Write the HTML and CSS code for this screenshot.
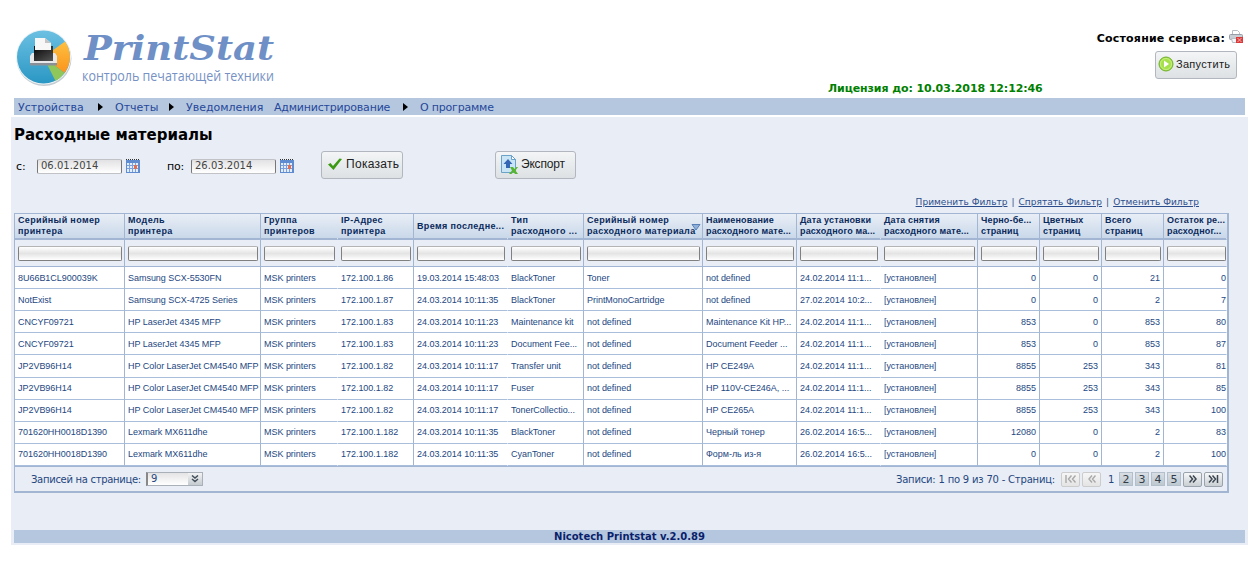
FILE: index.html
```html
<!DOCTYPE html>
<html lang="ru">
<head>
    <meta charset="UTF-8">
    <title>PrintStat</title>
    <link rel="stylesheet" href="styles.css">
</head>
<body>

    <!-- Shared icons -->
    <svg class="defs" width="0" height="0">
        <symbol id="calendar" viewBox="0 0 14 14">
            <rect x="0" y="1" width="14" height="13" fill="#5f8bd0"/>
            <rect x="1" y="4" width="11" height="9" fill="#e4edfa"/>
            <path d="M0 .5h14" stroke="#333" stroke-dasharray="1 1"/>
            <path d="M1 6.500h11M1 9.500h11M3.500 4v9M6.500 4v9M9.500 4v9" stroke="#7ba0dc"/>
            <rect x="8" y="6" width="3" height="4" fill="#e07050"/>
        </symbol>
    </svg>

    <!-- Header -->
    <div class="header">
        <svg class="logo" width="270" height="70" viewBox="0 0 270 70">
            <defs>
                <linearGradient id="blue" x1="0" y1="0" x2="0" y2="1">
                    <stop offset="0" stop-color="#6cc0e2"/>
                    <stop offset="1" stop-color="#2a97c4"/>
                </linearGradient>
                <linearGradient id="orange" x1="0" y1="0" x2="0" y2="1">
                    <stop offset="0" stop-color="#fdc040"/>
                    <stop offset="1" stop-color="#fb931d"/>
                </linearGradient>
                <linearGradient id="dark" x1="0" y1="0" x2="1" y2="1">
                    <stop offset="0" stop-color="#111"/>
                    <stop offset="1" stop-color="#555"/>
                </linearGradient>
            </defs>
            <circle cx="30" cy="34.500" r="27.500" fill="#c4cdd2"/>
            <circle cx="29.500" cy="33" r="27.500" fill="#eef3f5"/>
            <circle cx="29.500" cy="33" r="26.500" fill="url(#blue)"/>
            <path d="M29.500 33L51 17.500A26.500 26.500 0 0 1 50.500 49z" fill="url(#orange)"/>
            <path d="M29.500 33L50.500 49A26.500 26.500 0 0 1 41.500 57z" fill="#90c75a"/>
            <!-- printer -->
            <path d="M18 29h23l2 3v8H16v-8z" fill="#e8e8ea"/>
            <path d="M16 39h27v2.500H16z" fill="#8b9098"/>
            <path d="M20 22h19v14H20z" fill="url(#dark)"/>
            <path d="M21 28V14h10l6 5v9z" fill="#f7f7f7"/>
            <path d="M31 14v5h6z" fill="#c4c4c4"/>
            <path d="M20 26h19v11H20z" fill="url(#dark)"/>
            <text class="logo-name" x="70" y="36" textLength="190" lengthAdjust="spacingAndGlyphs">PrintStat</text>
            <text class="logo-sub" x="68" y="56.500" textLength="192" lengthAdjust="spacingAndGlyphs">контроль печатающей техники</text>
        </svg>
        <div class="license">Лицензия до: 10.03.2018 12:12:46</div>
        <div class="service">
            <div class="state">
                <span>Состояние сервиса:</span>
                <svg width="14" height="15" viewBox="0 0 14 15">
                    <path d="M3.500 6V1.500h5l2 2V6" fill="#fff" stroke="#b8bcc4"/>
                    <rect x=".5" y="5.500" width="13" height="5" rx="1" fill="#c9cdd4" stroke="#989ea8"/>
                    <path d="M2.500 9.500h8v4h-7z" fill="#f6f6f8" stroke="#b8bcc4"/>
                    <rect x="7" y="8" width="7" height="6" fill="#d93a3a"/>
                    <path d="M8.500 9l4 4M12.500 9l-4 4" stroke="#f4b0b0"/>
                </svg>
            </div>
            <button class="btn start">
                <svg width="16" height="16" viewBox="0 0 16 16">
                    <circle cx="8" cy="8" r="7" fill="#a6e04a" stroke="#6fae2c"/>
                    <circle cx="8" cy="8" r="5.500" fill="none" stroke="#c8f07e"/>
                    <path d="M6 4.500l5 3.500-5 3.500z" fill="#fff"/>
                </svg>
                <span>Запустить</span>
            </button>
        </div>
    </div>

    <!-- Menu -->
    <div class="menu">
        <a class="m1">Устройства</a><i class="arrow"></i>
        <a class="m2">Отчеты</a><i class="arrow"></i>
        <a class="m3">Уведомления</a>
        <a class="m4">Администрирование</a><i class="arrow"></i>
        <a class="m5">О программе</a>
    </div>

    <div class="content">
        <h1>Расходные материалы</h1>

        <div class="toolbar">
            <label class="from">с:</label>
            <input class="date" type="text" value="06.01.2014">
            <svg class="cal" width="14" height="14"><use href="#calendar"/></svg>
            <label class="to">по:</label>
            <input class="date" type="text" value="26.03.2014">
            <svg class="cal" width="14" height="14"><use href="#calendar"/></svg>
            <button class="btn show">
                <svg width="14" height="12" viewBox="0 0 14 12">
                    <path d="M0 6.500l2.500-1.500 2.500 3L11.500.5 14 1 5.500 12z" fill="#3c9a12"/>
                </svg>
                <span>Показать</span>
            </button>
            <button class="btn export">
                <svg width="17" height="19" viewBox="0 0 17 19">
                    <path d="M.5.5h10l4 4v13H.5z" fill="#c9e4f4" stroke="#6ba3c8"/>
                    <path d="M10.500.5v4h4z" fill="#fff" stroke="#6ba3c8"/>
                    <path d="M7 4l4.500 5H9v4H5V9H2.500z" fill="#3566b4"/>
                    <path d="M9 12h3l1.500 2 2-2H17l-2.500 3.500L17 19h-3l-1.500-2-2 2H8l3-3.500z" fill="#58b530"/>
                </svg>
                <span>Экспорт</span>
            </button>
        </div>

        <div class="filter-links">
            <a>Применить Фильтр</a><span>|</span><a>Спрятать Фильтр</a><span>|</span><a>Отменить Фильтр</a>
        </div>

        <div class="grid">
            <table>
                <colgroup>
                    <col class="w110"><col class="w136"><col class="w77"><col class="w76"><col class="w94"><col class="w76"><col class="w119">
                    <col class="w94"><col class="w84"><col class="w97"><col class="w62"><col class="w62"><col class="w62"><col class="w63">
                </colgroup>
                <thead>
                    <tr class="titles">
                        <th>Серийный номер<br>принтера</th>
                        <th>Модель<br>принтера</th>
                        <th>Группа<br>принтеров</th>
                        <th>IP-Адрес<br>принтера</th>
                        <th>Время последне...</th>
                        <th>Тип<br>расходного ...</th>
                        <th class="sorted">Серийный номер<br>расходного материала
                            <svg width="10" height="7" viewBox="0 0 10 7"><path d="M1 .5h8L5 6z" fill="#8fb0d8" stroke="#5880b4"/></svg>
                        </th>
                        <th>Наименование<br>расходного мате...</th>
                        <th>Дата установки<br>расходного ма...</th>
                        <th>Дата снятия<br>расходного мате...</th>
                        <th>Черно-бе...<br>страниц</th>
                        <th>Цветных<br>страниц</th>
                        <th>Всего<br>страниц</th>
                        <th>Остаток ре...<br>расходног...</th>
                    </tr>
                    <tr class="filters">
                        <td><input type="text"></td><td><input type="text"></td><td><input type="text"></td><td><input type="text"></td><td><input type="text"></td><td><input type="text"></td><td><input type="text"></td>
                        <td><input type="text"></td><td><input type="text"></td><td><input type="text"></td><td><input type="text"></td><td><input type="text"></td><td><input type="text"></td><td><input type="text"></td>
                    </tr>
                </thead>
                <tbody>
                    <tr><td>8U66B1CL900039K</td><td>Samsung SCX-5530FN</td><td>MSK printers</td><td>172.100.1.86</td><td>19.03.2014 15:48:03</td><td>BlackToner</td><td>Toner</td><td>not defined</td><td>24.02.2014 11:1...</td><td>[установлен]</td><td>0</td><td>0</td><td>21</td><td>0</td></tr>
                    <tr><td>NotExist</td><td>Samsung SCX-4725 Series</td><td>MSK printers</td><td>172.100.1.87</td><td>24.03.2014 10:11:35</td><td>BlackToner</td><td>PrintMonoCartridge</td><td>not defined</td><td>27.02.2014 10:2...</td><td>[установлен]</td><td>0</td><td>0</td><td>2</td><td>7</td></tr>
                    <tr><td>CNCYF09721</td><td>HP LaserJet 4345 MFP</td><td>MSK printers</td><td>172.100.1.83</td><td>24.03.2014 10:11:23</td><td>Maintenance kit</td><td>not defined</td><td>Maintenance Kit HP...</td><td>24.02.2014 11:1...</td><td>[установлен]</td><td>853</td><td>0</td><td>853</td><td>80</td></tr>
                    <tr><td>CNCYF09721</td><td>HP LaserJet 4345 MFP</td><td>MSK printers</td><td>172.100.1.83</td><td>24.03.2014 10:11:23</td><td>Document Fee...</td><td>not defined</td><td>Document Feeder ...</td><td>24.02.2014 11:1...</td><td>[установлен]</td><td>853</td><td>0</td><td>853</td><td>87</td></tr>
                    <tr><td>JP2VB96H14</td><td>HP Color LaserJet CM4540 MFP</td><td>MSK printers</td><td>172.100.1.82</td><td>24.03.2014 10:11:17</td><td>Transfer unit</td><td>not defined</td><td>HP CE249A</td><td>24.02.2014 11:1...</td><td>[установлен]</td><td>8855</td><td>253</td><td>343</td><td>81</td></tr>
                    <tr><td>JP2VB96H14</td><td>HP Color LaserJet CM4540 MFP</td><td>MSK printers</td><td>172.100.1.82</td><td>24.03.2014 10:11:17</td><td>Fuser</td><td>not defined</td><td>HP 110V-CE246A, ...</td><td>24.02.2014 11:1...</td><td>[установлен]</td><td>8855</td><td>253</td><td>343</td><td>85</td></tr>
                    <tr><td>JP2VB96H14</td><td>HP Color LaserJet CM4540 MFP</td><td>MSK printers</td><td>172.100.1.82</td><td>24.03.2014 10:11:17</td><td>TonerCollectio...</td><td>not defined</td><td>HP CE265A</td><td>24.02.2014 11:1...</td><td>[установлен]</td><td>8855</td><td>253</td><td>343</td><td>100</td></tr>
                    <tr><td>701620HH0018D1390</td><td>Lexmark MX611dhe</td><td>MSK printers</td><td>172.100.1.182</td><td>24.03.2014 10:11:35</td><td>BlackToner</td><td>not defined</td><td>Черный тонер</td><td>26.02.2014 16:5...</td><td>[установлен]</td><td>12080</td><td>0</td><td>2</td><td>83</td></tr>
                    <tr><td>701620HH0018D1390</td><td>Lexmark MX611dhe</td><td>MSK printers</td><td>172.100.1.182</td><td>24.03.2014 10:11:35</td><td>CyanToner</td><td>not defined</td><td>Форм-ль из-я</td><td>26.02.2014 16:5...</td><td>[установлен]</td><td>0</td><td>0</td><td>2</td><td>100</td></tr>
                </tbody>
            </table>

            <!-- Pager -->
            <div class="pager">
                <span class="page-size-label">Записей на странице:</span>
                <div class="page-size">
                    <span>9</span>
                    <div class="drop"><svg width="8" height="8" viewBox="0 0 8 8"><path d="M1 .5l3 2.500L7 .5M1 4l3 2.500L7 4" fill="none" stroke="#444f5c" stroke-width="1.500"/></svg></div>
                </div>
                <span class="total">Записи: 1 по 9 из 70 - Страниц:</span>
                <a class="nav off"><svg width="12" height="8" viewBox="0 0 12 8"><path d="M1 0v8M6.500.5L3.500 4l3 3.500M10.500.5L7.500 4l3 3.500" fill="none" stroke="#a8a8a8" stroke-width="1.400"/></svg></a>
                <a class="nav off"><svg width="8" height="8" viewBox="0 0 8 8"><path d="M4 .5L1 4l3 3.500M7.500.5L4.500 4l3 3.500" fill="none" stroke="#a8a8a8" stroke-width="1.400"/></svg></a>
                <span class="current">1</span>
                <a class="page">2</a>
                <a class="page">3</a>
                <a class="page">4</a>
                <a class="page">5</a>
                <a class="nav"><svg width="8" height="8" viewBox="0 0 8 8"><path d="M.5.5l3 3.500-3 3.500M4 .5L7 4 4 7.500" fill="none" stroke="#3c4650" stroke-width="1.500"/></svg></a>
                <a class="nav"><svg width="11" height="8" viewBox="0 0 11 8"><path d="M1 .5L4 4 1 7.500M4.500.5l3 3.500-3 3.500M9.500 0v8" fill="none" stroke="#3c4650" stroke-width="1.500"/></svg></a>
            </div>
        </div>

        <div class="footer">Nicotech Printstat v.2.0.89</div>
    </div>

</body>
</html>
```
FILE: styles.css
```css
* {
    box-sizing: border-box;
}

body {
    margin: 0;
    background: #fff;
    font-family: Verdana, "DejaVu Sans", sans-serif;
    font-size: 11px;
    color: #000;
}

.defs {
    display: block;
}

svg {
    flex: none;
}

/* Header */
.header {
    display: flex;
    height: 98px;
    padding-left: 14px;
}

.logo {
    margin-top: 24px;
    overflow: visible;
}

.logo-name {
    font-family: "DejaVu Serif", serif;
    font-size: 34px;
    font-weight: bold;
    font-style: italic;
    fill: #6f8fc7;
}

.logo-sub {
    font-family: "Open Sans", sans-serif;
    font-size: 14px;
    fill: #7691c4;
}

.license {
    margin: 82px 0 0 544px;
    width: 216px;
    line-height: 13px;
    font-weight: bold;
    letter-spacing: -0.1px;
    white-space: nowrap;
    color: #008000;
}

.service {
    display: flex;
    flex-direction: column;
    align-items: flex-end;
    width: 199px;
    padding-top: 29px;
}

.state {
    display: flex;
    align-items: flex-start;
    gap: 4px;
    height: 22px;
    line-height: 20px;
    font-weight: bold;
    letter-spacing: 0.2px;
    white-space: nowrap;
}

.btn {
    display: flex;
    align-items: center;
    height: 28px;
    padding: 0 0 2px 6px;
    border: 1px solid #b2b7bf;
    border-radius: 3px;
    background: linear-gradient(#f3f5f6, #dde1e3);
    font-family: "Liberation Sans", Arial, sans-serif;
    font-size: 12px;
    white-space: nowrap;
    color: #222;
}

.start {
    width: 82px;
    padding: 0 0 2px 2px;
    gap: 2px;
    margin-right: 6px;
    font-size: 11px;
    letter-spacing: 0.3px;
}

/* Menu */
.menu {
    display: flex;
    align-items: center;
    width: 1231px;
    height: 17px;
    margin-left: 14px;
    padding: 1px 0 0 4px;
    background: #b5c7df;
    color: #26479a;
    white-space: nowrap;
}

.arrow {
    border-left: 5px solid #000;
    border-top: 4px solid transparent;
    border-bottom: 4px solid transparent;
}

.m1 { width: 80px; }
.m2 { width: 54px; margin-left: 12px; }
.m3 { width: 88px; margin-left: 12px; }
.m4 { width: 129px; letter-spacing: -0.2px; }
.m5 { margin-left: 12px; letter-spacing: -0.2px; }

/* Content */
.content {
    width: 1237px;
    height: 428px;
    margin: 2px 0 0 11px;
    padding: 0 3px;
    background: #e9edf5;
}

h1 {
    margin: 0;
    height: 34px;
    line-height: 36px;
    font-size: 15px;
    white-space: nowrap;
}

.toolbar {
    display: flex;
    align-items: flex-start;
    height: 42px;
}

.toolbar label {
    padding: 8px 0 0 2px;
    line-height: 15px;
}

.from {
    width: 23px;
}

.to {
    width: 26px;
    margin-left: 25px;
    letter-spacing: -0.2px;
}

.date {
    width: 85px;
    height: 15px;
    margin-top: 8px;
    padding: 0 3px 2px;
    border: 1px solid #c0c2c6;
    border-left: 1px solid #777;
    border-right: 1px solid #777;
    border-radius: 2px;
    background: linear-gradient(#e2e2e4, #fff);
    font: 10px "DejaVu Sans", sans-serif;
    color: #444;
}

.cal {
    margin: 8px 0 0 4px;
}

.show {
    width: 82px;
    margin-left: 27px;
    gap: 4px;
    letter-spacing: 0.3px;
}

.export {
    width: 81px;
    margin-left: 92px;
    padding-left: 5px;
    gap: 3px;
    letter-spacing: -0.2px;
}

.filter-links {
    display: flex;
    justify-content: flex-end;
    height: 20px;
    padding-right: 46px;
    font-size: 9px;
    letter-spacing: 0.03px;
    line-height: 18px;
    color: #2c4d8c;
}

.filter-links a {
    text-decoration: underline;
}

.filter-links span {
    padding: 0 4px;
}

/* Grid */
.grid {
    width: 1215px;
    height: 280px;
    border: 1px solid #a2b6d3;
    border-right-width: 2px;
    border-bottom-width: 2px;
}

table {
    width: 1212px;
    table-layout: fixed;
    border-collapse: separate;
    border-spacing: 0;
    font-family: Arial, "Liberation Sans", sans-serif;
    font-size: 9px;
    color: #24477f;
}

.w62 { width: 62px; }
.w63 { width: 63px; }
.w76 { width: 76px; }
.w77 { width: 77px; }
.w84 { width: 84px; }
.w94 { width: 94px; }
.w97 { width: 97px; }
.w110 { width: 110px; }
.w119 { width: 119px; }
.w136 { width: 136px; }

th, td {
    padding: 0 0 0 3px;
    white-space: nowrap;
    text-align: left;
    border-right: 1px solid #a2b6d3;
}

tr > :nth-child(3),
tr > :nth-child(5),
tr > :nth-child(9),
tr > :nth-child(14) {
    border-right-color: transparent;
}

.titles th {
    height: 26px;
    line-height: 11px;
    letter-spacing: 0.15px;
    background: linear-gradient(#e9eef6, #c9d8ea);
    border-bottom: 2px solid #a2b6d3;
    color: #0a2a5c;
}

.titles th:nth-child(-n+7) {
    letter-spacing: 0.35px;
}

.sorted {
    position: relative;
}

.sorted svg {
    position: absolute;
    right: 1px;
    top: 10px;
}

.filters td {
    height: 27px;
    padding-right: 2px;
    border-bottom: 1px solid #a2b6d3;
    background: #e9edf5;
    vertical-align: middle;
}

.filters td:last-child {
    padding-right: 0;
}

.filters input {
    display: block;
    width: 100%;
    height: 15px;
    padding: 0;
    border: 1px solid #808080;
    border-top-color: #b4b4b4;
    border-radius: 2px;
    background: linear-gradient(#fff, #e4e4e4 50%, #fff);
}

tbody td {
    height: 22.110px;
    line-height: 12px;
    letter-spacing: -0.03px;
    background: #fff;
    border-bottom: 1px solid #a9bedb;
}

tbody td:nth-child(n+11) {
    padding-right: 3px;
    text-align: right;
}

tbody td:nth-child(14) {
    padding-right: 0;
}

/* Pager */
.pager {
    display: flex;
    align-items: center;
    height: 26px;
    padding: 0 4px 0 16px;
    border-top: 1px solid #a2b6d3;
    font-size: 10px;
    white-space: nowrap;
    color: #24477f;
}

.page-size-label {
    width: 115px;
    letter-spacing: -0.3px;
}

.page-size {
    display: flex;
    width: 57px;
    height: 14px;
    border: 1px solid #aab0b8;
    border-left: 2px solid #888;
    background: linear-gradient(#e4e4e6, #fff);
    line-height: 12px;
}

.page-size span {
    flex: 1;
    padding-left: 3px;
}

.drop {
    display: flex;
    align-items: center;
    justify-content: center;
    width: 14px;
    background: linear-gradient(#f2f3f4, #c5cbd0);
}

.total {
    flex: 1;
    padding-right: 4px;
    letter-spacing: -0.2px;
    text-align: right;
}

.nav {
    display: flex;
    align-items: center;
    justify-content: center;
    width: 19px;
    height: 15px;
    margin-left: 2px;
    border: 1px solid #9aa3ab;
    border-radius: 2px;
    background: linear-gradient(#f6f7f8, #c9cfd3);
}

.off {
    border-color: #ccc;
    background: linear-gradient(#f6f6f6, #e4e4e4);
}

.current {
    width: 16px;
    padding-left: 7px;
}

.page {
    width: 14px;
    height: 14px;
    margin-left: 2px;
    border: 1px solid #b3bfca;
    background: linear-gradient(#d8dee4, #bec8d0);
    line-height: 13px;
    font-size: 11px;
    text-align: center;
    color: #333c46;
}

.footer {
    width: 1231px;
    height: 13px;
    margin-top: 37px;
    background: #b5c7df;
    line-height: 14px;
    font-size: 10px;
    font-weight: bold;
    text-align: center;
    color: #0a1f6b;
}
```
